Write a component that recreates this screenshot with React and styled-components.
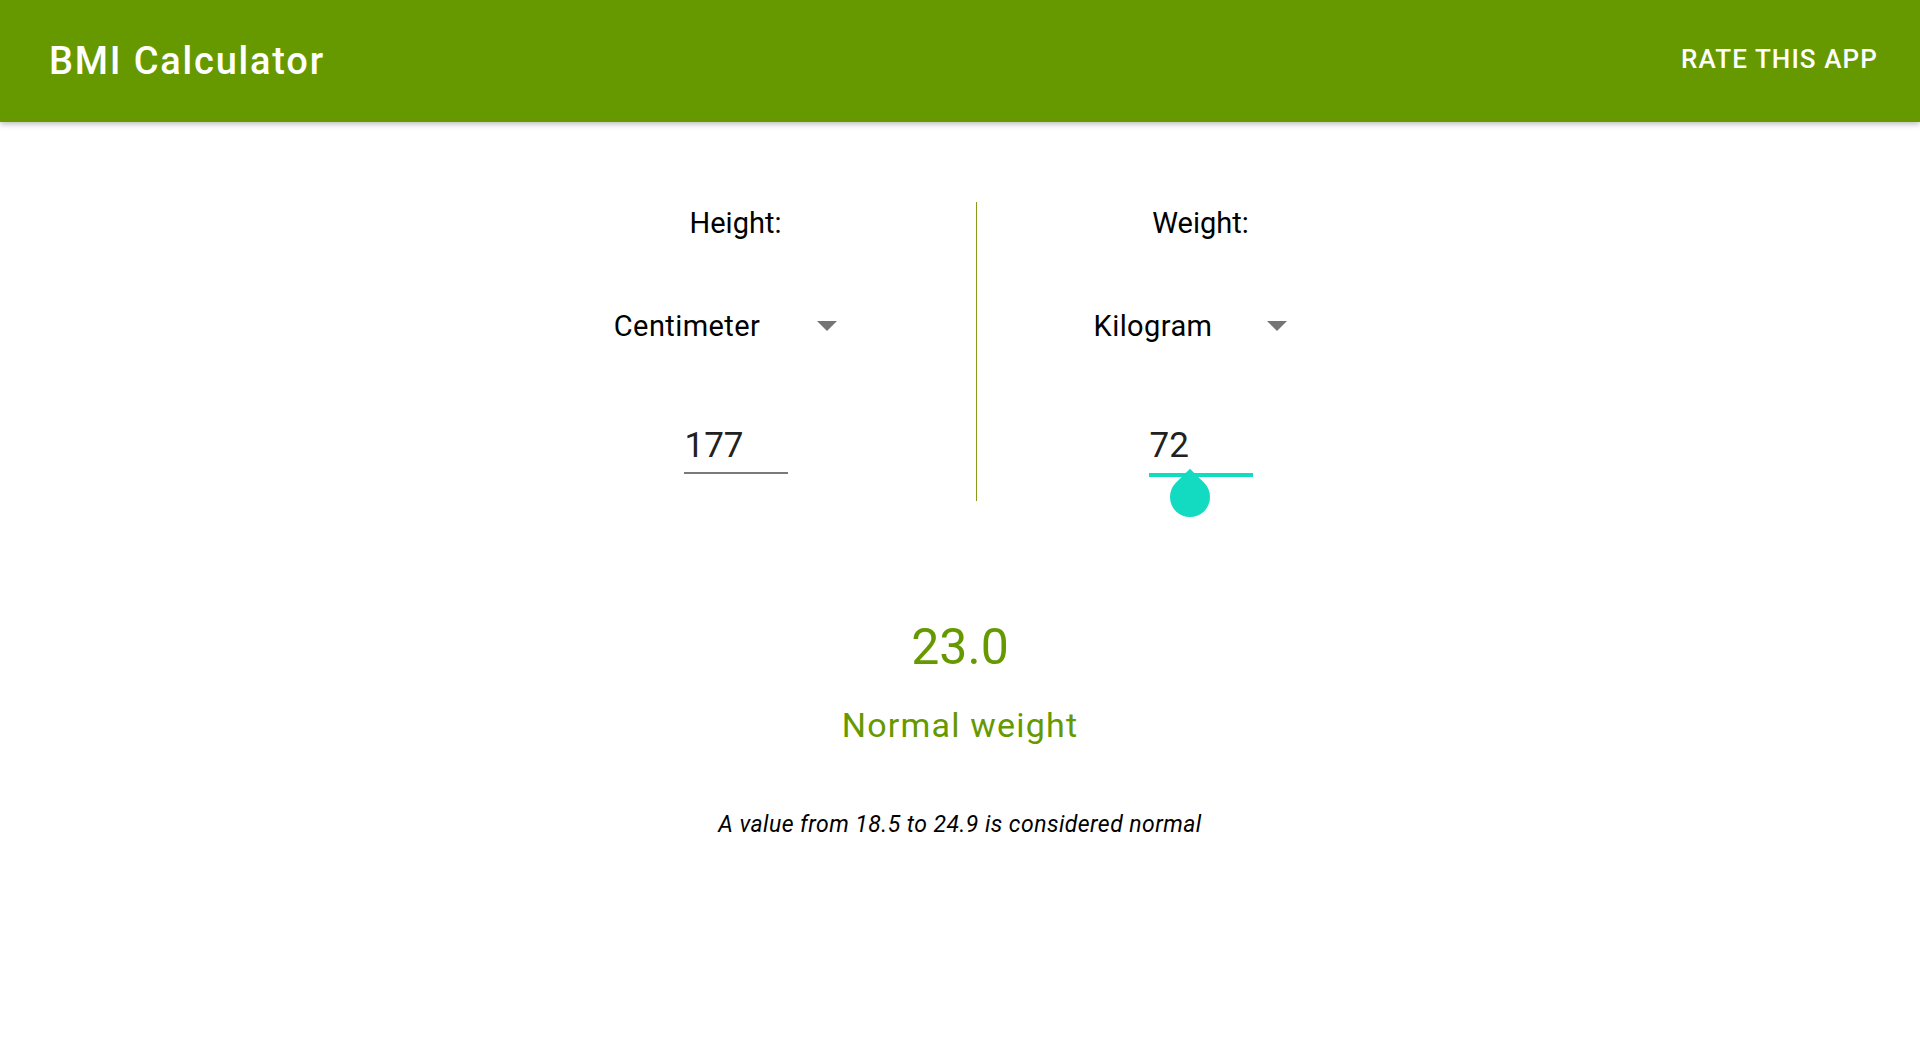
import React from "react";
import styled, { createGlobalStyle } from "styled-components";

const GREEN = "#669900";
const ACCENT = "#12dbc1";

const GlobalStyle = createGlobalStyle`
  body {
    margin: 0;
    background: #ffffff;
    font-family: Roboto, "Noto Sans", "Liberation Sans", sans-serif;
  }
`;

const AppBar = styled.header`
  height: 122px;
  background: ${GREEN};
  display: flex;
  align-items: center;
  justify-content: space-between;
  padding: 0 42px 0 49px;
  box-shadow: 0 2px 6px rgba(0, 0, 0, 0.28);
  position: relative;
  z-index: 1;
`;

const Title = styled.h1`
  margin: 0;
  font-size: 38px;
  font-weight: 500;
  letter-spacing: 1.8px;
  color: #ffffff;
`;

const MenuAction = styled.button`
  background: none;
  border: none;
  padding: 0;
  margin-bottom: 4px;
  font-family: inherit;
  font-size: 26px;
  font-weight: 500;
  letter-spacing: 1.1px;
  color: #ffffff;
  cursor: pointer;
`;

const Main = styled.main`
  display: flex;
  flex-direction: column;
  align-items: center;
`;

const InputsRow = styled.div`
  display: flex;
  margin-top: 80px;
`;

const Column = styled.section`
  width: ${(p) => p.$width}px;
  display: flex;
  flex-direction: column;
  align-items: center;
  padding-top: 4px;
`;

const Divider = styled.div`
  width: 1px;
  height: 299px;
  background: #879b1c;
`;

const Label = styled.div`
  font-size: 29px;
  line-height: 34px;
  color: #000000;
`;

const Spinner = styled.div`
  margin-top: 69px;
  display: flex;
  align-items: center;
  gap: ${(p) => p.$gap}px;
  padding-right: 20px;
  font-size: 29px;
  line-height: 34px;
  letter-spacing: 0.4px;
  color: #000000;
  cursor: pointer;
`;

const Arrow = styled.span`
  width: 0;
  height: 0;
  border-left: 10px solid transparent;
  border-right: 10px solid transparent;
  border-top: 10px solid #757575;
`;

const Field = styled.div`
  position: relative;
  margin-top: 82px;
  width: 103px;
  padding: 0 0 ${(p) => (p.$active ? 7 : 6)}px 1px;
  border-bottom: ${(p) => (p.$active ? `4px solid ${ACCENT}` : "2px solid #7a7a7a")};
  font-size: 35px;
  line-height: 41px;
  color: #212121;
`;

const Handle = styled.span`
  position: absolute;
  left: 21px;
  top: 52px;
  width: 40px;
  height: 40px;
  background: ${ACCENT};
  border-radius: 0 50% 50% 50%;
  transform: rotate(45deg);
`;

const BmiValue = styled.div`
  margin-top: 117px;
  font-size: 50px;
  line-height: 59px;
  color: ${GREEN};
`;

const Status = styled.div`
  margin-top: 28px;
  font-size: 34px;
  line-height: 40px;
  letter-spacing: 1.2px;
  color: ${GREEN};
`;

const Note = styled.p`
  margin: 66px 0 0;
  font-size: 23px;
  line-height: 27px;
  font-style: italic;
  letter-spacing: 0.45px;
  color: #000000;
`;

const MeasureColumn = ({ width, label, unit, gap, value, active }) => (
  <Column $width={width}>
    <Label>{label}</Label>
    <Spinner $gap={gap}>
      <span>{unit}</span>
      <Arrow />
    </Spinner>
    <Field $active={active}>
      {value}
      {active && <Handle />}
    </Field>
  </Column>
);

export default function App() {
  return (
    <>
      <GlobalStyle />
      <AppBar>
        <Title>BMI Calculator</Title>
        <MenuAction>RATE THIS APP</MenuAction>
      </AppBar>
      <Main>
        <InputsRow>
          <MeasureColumn width={480} label="Height:" unit="Centimeter" gap={57} value="177" />
          <Divider />
          <MeasureColumn width={448} label="Weight:" unit="Kilogram" gap={55} value="72" active />
        </InputsRow>
        <BmiValue>23.0</BmiValue>
        <Status>Normal weight</Status>
        <Note>A value from 18.5 to 24.9 is considered normal</Note>
      </Main>
    </>
  );
}
